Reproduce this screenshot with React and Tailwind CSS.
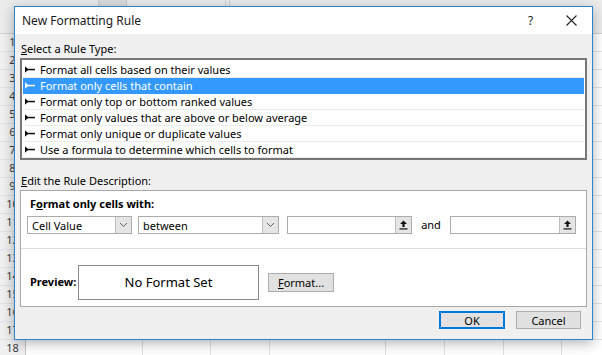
import React from "react";

const colWidths = ["w-[117px]", "w-[68px]", "w-[59px]", "w-[116px]", "w-[59px]", "w-[59px]", "w-[58px]", "w-[60px]"];
const rows = Array.from({ length: 18 }, (_, i) => i + 1);

const ruleTypes = [
  "Format all cells based on their values",
  "Format only cells that contain",
  "Format only top or bottom ranked values",
  "Format only values that are above or below average",
  "Format only unique or duplicate values",
  "Use a formula to determine which cells to format",
];

const Sheet = () => (
  <div className="flex flex-col">
    <div className="flex h-[34px] shrink-0 bg-[#ececec] border-b border-[#d0d0d0]">
      <div className="w-[99px] border-r border-[#d0d0d0]" />
      <div className="w-[28px] bg-[#dcdcdc] border-r border-[#c6c6c6]" />
      <div className="w-[99px] border-r border-[#d0d0d0]" />
      <div className="w-[4px] border-r border-[#d0d0d0]" />
    </div>
    {rows.map((n) => (
      <div key={n} className="flex h-[18px] shrink-0 border-b border-[#e2e2e2]">
        <div className="w-[26px] shrink-0 bg-[#f0f0f0] border-r border-[#c6c6c6] flex items-center justify-center text-[11px] text-[#3c3c3c]">
          {n}
        </div>
        {colWidths.map((w, i) => (
          <div key={i} className={`${w} shrink-0 border-r border-[#e2e2e2]`} />
        ))}
      </div>
    ))}
  </div>
);

const RuleArrow = ({ white }) => (
  <svg width="10" height="7" viewBox="0 0 10 7" className="shrink-0">
    <path d="M0 0.3 L3.6 3.5 L0 6.7 Z" fill={white ? "#fff" : "#111"} />
    <rect x="1" y="2.8" width="9" height="1.5" fill={white ? "#fff" : "#111"} />
  </svg>
);

const Chevron = () => (
  <svg width="9" height="6" viewBox="0 0 9 6">
    <path d="M1 1 L4.5 4.5 L8 1" fill="none" stroke="#606060" strokeWidth="1" />
  </svg>
);

const Combo = ({ width, value }) => (
  <div className={`${width} h-[18px] shrink-0 flex items-center bg-white border border-[#acacac]`}>
    <span className="flex-1 pl-[4px] text-[11px] leading-none">{value}</span>
    <div className="w-[16px] h-[16px] flex items-center justify-center bg-[#e5e5e5] border-l border-[#c0c0c0]">
      <Chevron />
    </div>
  </div>
);

const RefInput = ({ width }) => (
  <div className={`${width} h-[18px] shrink-0 flex items-center justify-end bg-white border border-[#acacac]`}>
    <div className="w-[16px] h-[16px] flex items-center justify-center bg-[#e5e5e5] border-l border-[#c0c0c0]">
      <svg width="9" height="10" viewBox="0 0 9 10">
        <path d="M4.5 0.5 L8 4 L5.6 4 L5.6 7 L3.4 7 L3.4 4 L1 4 Z" fill="#111" />
        <rect x="0.5" y="8.3" width="8" height="1.2" fill="#111" />
      </svg>
    </div>
  </div>
);

const Dialog = () => (
  <div className="absolute left-[14px] top-[6px] w-[579px] h-[334px] flex flex-col bg-[#f0f0f0] border border-[#2a84d6] shadow-[0_3px_12px_rgba(0,0,0,0.3)]">
    {/* Title bar */}
    <div className="h-[27px] shrink-0 flex items-center bg-white pl-[7px]">
      <span className="flex-1 text-[12px] text-[#1a1a1a]">New Formatting Rule</span>
      <span className="w-[12px] text-[12px] text-[#222] mr-[26px]">?</span>
      <svg width="11" height="11" viewBox="0 0 11 11" className="mr-[15px]">
        <path d="M0.5 0.5 L10.5 10.5 M10.5 0.5 L0.5 10.5" stroke="#222" strokeWidth="1.1" />
      </svg>
    </div>

    <div className="flex flex-col px-[5px] text-[11px] text-black">
      <div className="mt-[8px] mb-[2px] h-[14px] leading-[14px] px-[1px]">
        <span className="underline">S</span>elect a Rule Type:
      </div>

      {/* Rule type list */}
      <div className="h-[102px] bg-white border-2 border-[#777] pt-[2px] px-[1px]">
        {ruleTypes.map((r, i) => (
          <div
            key={r}
            className={`h-[16px] flex items-center gap-[5px] pl-[2px] border-b ${
              i === 1 ? "bg-[#3399ff] text-white border-[#3399ff]" : "border-[#ececec]"
            }`}
          >
            <RuleArrow white={i === 1} />
            <span className="leading-none">{r}</span>
          </div>
        ))}
      </div>

      <div className="mt-[14px] mb-[2px] h-[14px] leading-[14px] px-[1px]">
        <span className="underline">E</span>dit the Rule Description:
      </div>

      {/* Description box */}
      <div className="h-[117px] bg-white border border-[#a8a8a8] flex flex-col">
        <div className="mt-[6px] h-[14px] leading-[14px] pl-[9px] font-bold">
          F<span className="underline">o</span>rmat only cells with:
        </div>
        <div className="mt-[5px] flex items-center pl-[6px]">
          <Combo width="w-[105px]" value="Cell Value" />
          <div className="w-[6px]" />
          <Combo width="w-[141px]" value="between" />
          <div className="w-[8px]" />
          <RefInput width="w-[125px]" />
          <span className="w-[38px] text-center">and</span>
          <RefInput width="w-[126px]" />
        </div>
        <div className="mt-[14px] h-px bg-[#dcdcdc]" />
        <div className="mt-[16px] flex items-center pl-[9px]">
          <span className="w-[48px] font-bold">Preview:</span>
          <div className="w-[181px] h-[35px] flex items-center justify-center border border-[#8a8a8a] text-[13px]">
            No Format Set
          </div>
          <button className="ml-[9px] w-[66px] h-[19px] bg-[#e1e1e1] border border-[#adadad] text-[11px] leading-none">
            <span className="underline">F</span>ormat...
          </button>
        </div>
      </div>

      {/* Footer buttons */}
      <div className="mt-[4px] flex justify-end gap-[11px] pr-[6px]">
        <button className="w-[66px] h-[18px] bg-[#e1e1e1] border-2 border-[#0078d7] text-[11px] leading-none">
          OK
        </button>
        <button className="w-[65px] h-[18px] bg-[#e1e1e1] border border-[#adadad] text-[11px] leading-none">
          Cancel
        </button>
      </div>
    </div>
  </div>
);

export default function App() {
  return (
    <div className="relative w-[602px] h-[355px] overflow-hidden bg-white font-['Noto_Sans',sans-serif]">
      <Sheet />
      <Dialog />
    </div>
  );
}
